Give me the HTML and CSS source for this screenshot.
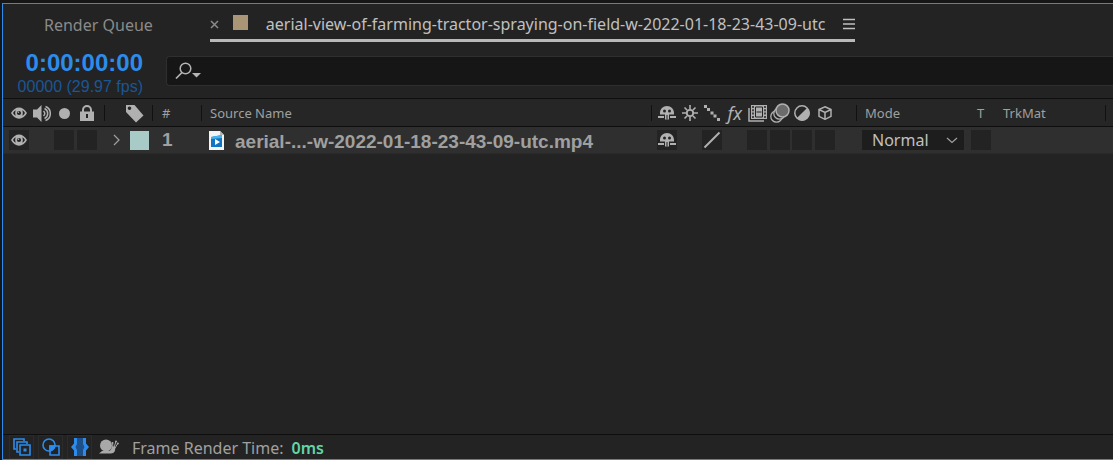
FILE: index.html
```html
<!DOCTYPE html>
<html lang="en">
<head>
    <meta charset="utf-8">
    <title>Timeline</title>
    <link rel="stylesheet" href="styles.css">
</head>
<body>

<!-- Shapes used more than once -->
<svg class="defs" aria-hidden="true">
    <symbol id="eye" viewBox="0 0 16 12">
        <path d="M0 6C4-1.500 12-1.500 16 6C12 13.500 4 13.500 0 6Z" fill="currentColor"/>
        <path d="M2 6Q3.200 4 4.600 3.200Q3.700 6 4.600 8.800Q3.200 8 2 6ZM14 6Q12.800 4 11.400 3.200Q12.300 6 11.400 8.800Q12.800 8 14 6Z" fill="#232323"/>
        <circle cx="8" cy="6" r="2.100" fill="#232323"/>
        <circle cx="7.400" cy="5.200" r=".8" fill="currentColor"/>
    </symbol>
    <symbol id="shy" viewBox="0 0 20 16">
        <path d="M3 9.500V8C3 4 6 1 10 1S17 4 17 8V9.500H12V14.500H8V9.500Z" fill="currentColor"/>
        <circle cx="7.500" cy="6" r="1.500" fill="#232323"/>
        <circle cx="12.500" cy="6" r="1.500" fill="#232323"/>
        <path d="M10 10V14.500" stroke="#232323"/>
        <path d="M1 12H7M13 12H19" stroke="currentColor" stroke-width="2"/>
    </symbol>
</svg>

<div class="panel">
    <div class="tabs">
        <button class="tab">Render Queue</button>
        <div class="tab active">
            <button class="iconBtn close" aria-label="Close">
                <svg width="9" height="9" viewBox="0 0 9 9"><path d="M1 1L8 8M8 1L1 8" stroke="currentColor" stroke-width="1.500"/></svg>
            </button>
            <span class="swatch"></span>
            <button class="tabName">aerial-view-of-farming-tractor-spraying-on-field-w-2022-01-18-23-43-09-utc</button>
            <button class="iconBtn menu" aria-label="Panel menu">
                <svg width="12" height="12" viewBox="0 0 12 12"><path d="M0 1.500H12M0 6H12M0 10.500H12" stroke="currentColor" stroke-width="1.500"/></svg>
            </button>
        </div>
    </div>

    <div class="toolbar">
        <div class="time">
            <div class="timecode">0:00:00:00</div>
            <div class="fps">00000 (29.97 fps)</div>
        </div>
        <div class="search">
            <svg width="26" height="18" viewBox="0 0 26 18">
                <circle cx="10.500" cy="6.500" r="5.300" fill="none" stroke="#b4b4b4" stroke-width="1.500"/>
                <path d="M7 10.500L1 16.500" stroke="#b4b4b4" stroke-width="1.700"/>
                <path d="M17 11H26L21.500 15.500Z" fill="#b4b4b4"/>
            </svg>
            <input type="text" aria-label="Search layers">
        </div>
    </div>

    <table class="layers">
        <colgroup>
            <col class="colAv"><col class="colLabel"><col class="colNum"><col>
            <col class="colSwitches"><col class="colMode"><col class="colT"><col class="colTrk"><col class="colEnd">
        </colgroup>
        <thead>
            <tr>
                <th class="split">
                    <div class="cells av">
                        <span class="cell"><svg width="16" height="12"><use href="#eye"/></svg></span>
                        <span class="cell"><svg width="18" height="17" viewBox="0 0 18 17">
                            <path d="M0 4.500H4L8.500 0V17L4 12.500H0Z" fill="currentColor"/>
                            <path d="M10.500 6Q13 8.500 10.500 11M12.500 1.500A7.500 7.500 0 0 1 12.500 15.500M11.500 3.500A5.500 5.500 0 0 1 11.500 13.500" fill="none" stroke="currentColor" stroke-width="1.500"/>
                        </svg></span>
                        <span class="cell"><svg width="11" height="11"><circle cx="5.500" cy="5.500" r="5.500" fill="currentColor"/></svg></span>
                        <span class="cell"><svg width="14" height="16" viewBox="0 0 14 16">
                            <path d="M3 7V5A4 4 0 0 1 11 5V7" fill="none" stroke="currentColor" stroke-width="2"/>
                            <path d="M0 6.500H14V16H0Z" fill="currentColor"/>
                            <path d="M7 9V13" stroke="#232323" stroke-width="2"/>
                        </svg></span>
                    </div>
                </th>
                <th class="split labelHead">
                    <svg width="19" height="19" viewBox="0 0 19 19">
                        <path fill-rule="evenodd" d="M1 1H9.500L18.500 11.500L11 18.500L1 8ZM4.500 2.500A1.800 1.800 0 1 0 4.500 6.100A1.800 1.800 0 1 0 4.500 2.500Z" fill="currentColor"/>
                    </svg>
                </th>
                <th class="split numHead">#</th>
                <th class="split nameHead">Source Name</th>
                <th class="split">
                    <div class="cells switches">
                        <span class="cell"><svg width="20" height="16"><use href="#shy"/></svg></span>
                        <span class="cell"><svg width="16" height="16" viewBox="0 0 16 16">
                            <circle cx="8" cy="8" r="3.200" fill="none" stroke="currentColor" stroke-width="1.800"/>
                            <path d="M8 0V4M8 12V16M0 8H4M12 8H16M2.500 2.500L5 5M11 11L13.500 13.500M13.500 2.500L11 5M2.500 13.500L5 11" stroke="currentColor" stroke-width="1.600"/>
                        </svg></span>
                        <span class="cell"><svg width="16" height="16" viewBox="0 0 16 16">
                            <path d="M0 0H3V3H0ZM3 3H6V6H3ZM6.500 6.500H9.500V9.500H6.500ZM9.500 9.500H12.500V12.500H9.500ZM13 13H16V16H13Z" fill="currentColor"/>
                        </svg></span>
                        <span class="cell fx">fx</span>
                        <span class="cell"><svg width="19" height="17" viewBox="0 0 19 17">
                            <path d="M1 3V16H16" fill="none" stroke="currentColor" stroke-width="1.500"/>
                            <path d="M3 0H19V14H3Z" fill="currentColor"/>
                            <path d="M5 1V13M17 1V13" stroke="#232323" stroke-width="1.500" stroke-dasharray="2 1.300"/>
                            <path d="M7.500 2H14.500V12H7.500ZM8.500 7H13.500" fill="none" stroke="#232323"/>
                        </svg></span>
                        <span class="cell"><svg width="20" height="20" viewBox="0 0 20 20">
                            <circle cx="6.500" cy="13.500" r="5.700" fill="#232323" stroke="currentColor" stroke-width="1.300"/>
                            <circle cx="9.500" cy="10.500" r="5.700" fill="#232323" stroke="currentColor" stroke-width="1.300"/>
                            <circle cx="12.500" cy="7.500" r="6.500" fill="#6b6b6b" stroke="currentColor" stroke-width="1.500"/>
                        </svg></span>
                        <span class="cell"><svg width="16" height="16" viewBox="0 0 16 16">
                            <circle cx="8" cy="8" r="7.200" fill="none" stroke="currentColor" stroke-width="1.500"/>
                            <path d="M13.300 2.700A7.500 7.500 0 1 1 2.700 13.300Z" fill="currentColor"/>
                        </svg></span>
                        <span class="cell"><svg width="14" height="14" viewBox="0 0 14 14">
                            <path d="M7 .8L13 3.500V10.300L7 13.300L1 10.300V3.500ZM1 3.500L7 6.500L13 3.500M7 6.500V13" fill="none" stroke="currentColor" stroke-width="1.500"/>
                        </svg></span>
                    </div>
                </th>
                <th class="modeHead">Mode</th>
                <th class="tHead">T</th>
                <th class="split trkHead">TrkMat</th>
                <th></th>
            </tr>
        </thead>
        <tbody>
            <tr>
                <td>
                    <div class="cells av">
                        <span class="cell box"><svg width="16" height="12"><use href="#eye"/></svg></span>
                        <span class="cell"></span>
                        <span class="cell box"></span>
                        <span class="cell box"></span>
                    </div>
                </td>
                <td>
                    <div class="labelCell">
                        <svg width="7" height="12" viewBox="0 0 7 12"><path d="M1 1L6 6L1 11" fill="none" stroke="#a0a0a0" stroke-width="1.200"/></svg>
                        <span class="label"></span>
                    </div>
                </td>
                <td class="num">1</td>
                <td>
                    <div class="nameCell">
                        <svg width="15" height="19" viewBox="0 0 15 19">
                            <path d="M0 0H11L15 4V19H0Z" fill="#f4f4f4"/>
                            <path d="M11 0V4H15Z" fill="#b5b5b5"/>
                            <path d="M2 6L13 4V16H2Z" fill="#1374c4"/>
                            <path d="M2 6L13 4V7L2 8Z" fill="#45b5ef"/>
                            <path d="M6 8L11 11L6 14Z" fill="#fff"/>
                        </svg>
                        <span class="name">aerial-...-w-2022-01-18-23-43-09-utc.mp4</span>
                    </div>
                </td>
                <td>
                    <div class="cells switches">
                        <span class="cell box"><svg width="20" height="16"><use href="#shy"/></svg></span>
                        <span class="cell"></span>
                        <span class="cell box"><svg width="18" height="18" viewBox="0 0 18 18"><path d="M1.500 16.500L16.500 1.500" stroke="currentColor" stroke-width="2"/></svg></span>
                        <span class="cell"></span>
                        <span class="cell box"></span>
                        <span class="cell box"></span>
                        <span class="cell box"></span>
                        <span class="cell box"></span>
                    </div>
                </td>
                <td>
                    <div class="modeCell">
                        <select aria-label="Mode"><option>Normal</option></select>
                        <svg width="12" height="7" viewBox="0 0 12 7"><path d="M1 1L6 5.500L11 1" fill="none" stroke="#a0a0a0" stroke-width="1.200"/></svg>
                    </div>
                </td>
                <td><div class="cell box tBox"></div></td>
                <td></td>
                <td></td>
            </tr>
        </tbody>
    </table>

    <div class="empty"></div>

    <div class="footer">
        <button class="toggle" aria-label="Layer switches">
            <svg width="18" height="18" viewBox="0 0 18 18" fill="none" stroke="currentColor" stroke-width="1.600">
                <path d="M3 11H1V1H11V3M6 14H4V4H14V6M7 7H17V17H7Z"/>
                <path d="M10.500 10.500H13.500V13.500H10.500Z" fill="currentColor" stroke="none"/>
            </svg>
        </button>
        <button class="toggle" aria-label="Transfer controls">
            <svg width="18" height="18" viewBox="0 0 18 18" fill="none" stroke="currentColor" stroke-width="1.600">
                <path d="M8 8H12.500A6 6 0 0 1 8 12.500Z" fill="currentColor"/>
                <circle cx="7" cy="7" r="6"/>
                <path d="M8 8H17V17H8Z"/>
            </svg>
        </button>
        <button class="toggle" aria-label="In and out">
            <svg width="18" height="18" viewBox="0 0 18 18">
                <path d="M4 0H14V18H4Z" fill="#1d5088"/>
                <path d="M3 0H6V6L4.500 9L6 12V18H3V12.500L0 9L3 5.500ZM15 0H12V6L13.500 9L12 12V18H15V12.500L18 9L15 5.500Z" fill="currentColor"/>
            </svg>
        </button>
        <button class="toggle snail" aria-label="Render time">
            <svg width="20" height="16" viewBox="0 0 20 16">
                <circle cx="7" cy="6.500" r="6" fill="currentColor"/>
                <path d="M0 14.500L3 12H10Q13 11 12.500 7L16 8Q17 14 12 14.500Z" fill="currentColor"/>
                <path d="M14 9L13.500 3M15 9L17 2M15.500 10L19 4" stroke="currentColor"/>
                <circle cx="13.500" cy="4" r="1" fill="currentColor"/>
                <circle cx="17" cy="2.500" r="1" fill="currentColor"/>
                <circle cx="18.800" cy="4.500" r="1" fill="currentColor"/>
            </svg>
        </button>
        <span class="renderLabel">Frame Render Time:</span>
        <span class="renderTime">0ms</span>
    </div>
</div>

</body>
</html>
```
FILE: styles.css
```css
* {
    box-sizing: border-box;
}
body {
    margin: 0;
    padding: 3px 0 0 2px;
    height: 100vh;
    background-color: #161616;
    color: #a0a0a0;
    font-family: "Noto Sans", sans-serif;
    font-size: 16px;
}
button, input, select {
    font: inherit;
    color: inherit;
    background: none;
    border: none;
    padding: 0;
    margin: 0;
}
svg {
    display: block;
    flex: none;
}
.defs {
    position: absolute;
    width: 0;
    height: 0;
}
.panel {
    display: flex;
    flex-direction: column;
    height: 100%;
    border: 1px solid #2d8ceb;
    border-right: none;
    background-color: #232323;
}

/* Tabs */
.tabs {
    display: flex;
    gap: 57px;
    height: 38px;
    padding-left: 41px;
}
.tab {
    padding-top: 3px;
    color: #8a8a8a;
    white-space: nowrap;
}
.tab.active {
    display: flex;
    align-items: center;
    padding-top: 5px;
    border-bottom: 3px solid #b9b9b9;
    color: #c0c0c0;
}
.iconBtn {
    display: flex;
}
.close {
    color: #8a8a8a;
}
.swatch {
    width: 15px;
    height: 15px;
    margin: 0 18px 4px 14px;
    background-color: #a99676;
}
.menu {
    margin-left: 18px;
}

/* Time and search */
.toolbar {
    display: flex;
    height: 56px;
}
.time {
    width: 140px;
    padding-top: 8px;
    text-align: right;
    font-family: "Liberation Sans", Arial, sans-serif;
}
.timecode {
    font-size: 24px;
    font-weight: bold;
    line-height: 26px;
    color: #2d8ceb;
}
.fps {
    line-height: 22px;
    color: #1b5695;
}
.search {
    display: flex;
    align-items: center;
    flex: 1;
    height: 30px;
    margin: 14px 0 0 23px;
    padding-left: 8px;
    border: 1px solid #2f2f2f;
    border-right: none;
    border-radius: 4px 0 0 4px;
    background-color: #161616;
}
.search input {
    flex: 1;
    margin-left: 6px;
    outline: none;
}

/* Layer list */
.layers {
    width: 100%;
    table-layout: fixed;
    border-collapse: collapse;
    border-top: 1px solid #0e0e0e;
}
.colAv { width: 102px; }
.colLabel { width: 48px; }
.colNum { width: 49px; }
.colSwitches { width: 205px; }
.colMode { width: 112px; }
.colT { width: 31px; }
.colTrk { width: 106px; }
.colEnd { width: 7px; }
th, td {
    height: 27px;
    padding: 0;
    text-align: left;
}
th {
    height: 28px;
    padding-top: 1px;
    font-size: 13px;
    font-weight: normal;
    color: #a0a0a0;
    background: #262626;
    border-bottom: 1px solid #0e0e0e;
}
/* short divider at the right side of a heading */
th.split {
    background: linear-gradient(#111, #111) right center / 1px 16px no-repeat #262626;
}
td {
    background-color: #2f2f2f;
    border-bottom: 1px solid #292929;
}
.cells {
    display: flex;
    justify-content: space-between;
    color: #b0b0b0;
}
.av {
    width: 88px;
    margin-left: 6px;
}
.switches {
    width: 178px;
    margin-left: 5px;
}
.cell {
    display: flex;
    align-items: center;
    justify-content: center;
    width: 20px;
    height: 20px;
}
.box {
    background-color: #232323;
}
.fx {
    font-size: 18px;
    font-style: italic;
}
.labelHead {
    padding-left: 20px;
    color: #b0b0b0;
}
.numHead, .num {
    padding-left: 9px;
}
.nameHead, .modeHead {
    padding-left: 8px;
}
.tHead {
    padding-left: 8px;
}
.trkHead {
    padding-left: 3px;
}
.labelCell {
    display: flex;
    align-items: center;
    gap: 10px;
    padding-left: 8px;
}
.label {
    width: 19px;
    height: 19px;
    background-color: #a9cbc8;
}
.num, .nameCell {
    font-family: "Liberation Sans", Arial, sans-serif;
    font-size: 19px;
    font-weight: bold;
}
.nameCell {
    display: flex;
    align-items: center;
    gap: 11px;
    padding-left: 7px;
    white-space: nowrap;
}
.name {
    padding-top: 3px;
    line-height: 20px;
}
.modeCell {
    display: flex;
    align-items: center;
    width: 102px;
    height: 20px;
    margin-left: 5px;
    background-color: #1d1d1d;
}
.modeCell select {
    appearance: none;
    width: 102px;
    height: 20px;
    padding-left: 10px;
    line-height: 20px;
    color: #c0c0c0;
}
.modeCell svg {
    margin-left: -18px;
    pointer-events: none;
}
.tBox {
    margin-left: 2px;
}

.empty {
    flex: 1;
}

/* Footer */
.footer {
    display: flex;
    align-items: center;
    gap: 4px;
    height: 25px;
    padding-left: 6px;
    border-top: 1px solid #0e0e0e;
}
.toggle {
    display: flex;
    align-items: center;
    justify-content: center;
    width: 25px;
    height: 24px;
    border: 1px solid #2b2b2b;
    color: #2d8ceb;
}
.snail {
    border-color: transparent;
    color: #a8a8a8;
}
.renderLabel, .renderTime {
    padding-top: 2px;
}
.renderLabel {
    margin-left: 7px;
}
.renderTime {
    margin-left: 4px;
    font-weight: 600;
    color: #62d5a4;
}
```
